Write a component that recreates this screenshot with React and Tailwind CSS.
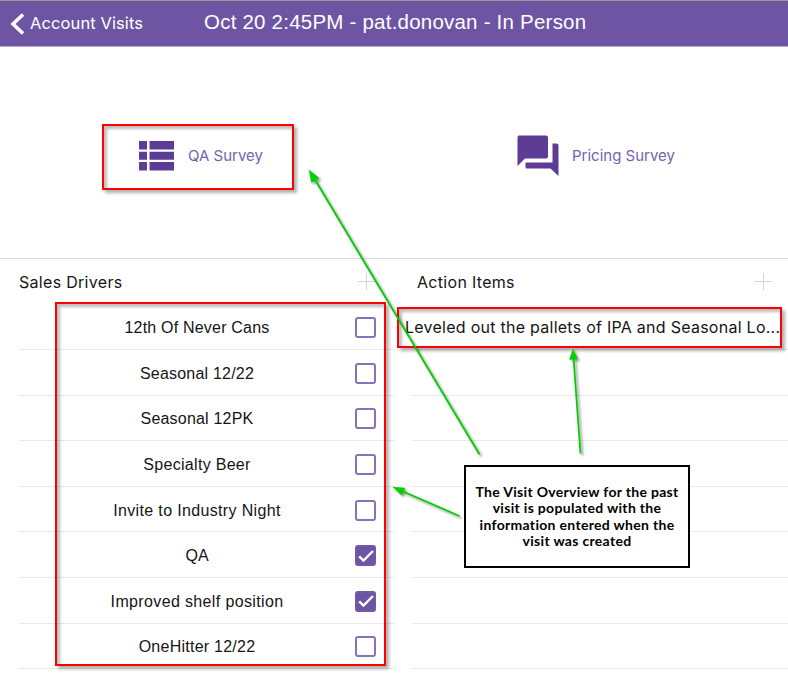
import React from "react";

const drivers = [
  { label: "12th Of Never Cans", spacing: "tracking-[0.2px]" },
  { label: "Seasonal 12/22", spacing: "tracking-[0.2px]" },
  { label: "Seasonal 12PK", spacing: "tracking-[0.2px]" },
  { label: "Specialty Beer", spacing: "tracking-[0.3px]" },
  { label: "Invite to Industry Night", spacing: "tracking-[0.35px]" },
  { label: "QA", spacing: "tracking-[0px]", checked: true },
  { label: "Improved shelf position", spacing: "tracking-[0.36px]", checked: true },
  { label: "OneHitter 12/22", spacing: "tracking-[0.25px]" },
];

const Checkbox = ({ checked }) => (
  <span
    className={
      "flex h-[21px] w-[21px] shrink-0 items-center justify-center rounded-[3px] border-2 " +
      (checked ? "border-[#7158aa] bg-[#6b54a4]" : "border-[#8473b8] bg-white")
    }
  >
    {checked && (
      <svg width="16" height="16" viewBox="0 0 16 16" fill="none" className="shrink-0">
        <path d="M1.2 8.4L5.5 12.5L15 3" stroke="white" strokeWidth="2.4" />
      </svg>
    )}
  </span>
);

const Plus = () => (
  <svg width="17" height="17" viewBox="0 0 17 17" stroke="#d4d4d4">
    <path d="M8.5 0V17M0 8.5H17" />
  </svg>
);

const Frame = ({ className }) => (
  <div
    className={
      "absolute border-2 border-[#ff0000] shadow-[3px_3px_3px_rgba(0,0,0,0.3),inset_3px_3px_3px_rgba(0,0,0,0.26)] " +
      className
    }
  />
);

export default function App() {
  return (
    <div className="relative h-[675px] w-[788px] overflow-hidden bg-white font-['Liberation_Sans',sans-serif] text-[#151515]">
      <header className="flex h-[47px] border-t border-b border-t-[#9a958e] border-b-[#b5abcf] bg-[#6d55a4] text-white">
        <div className="flex w-[204px] items-center pl-[10px]">
          <svg width="15" height="22" viewBox="0 0 15 22" fill="none">
            <path d="M13 1.5L3 11L13 20.5" stroke="white" strokeWidth="3.6" />
          </svg>
          <span className="-mt-[2px] ml-[5px] whitespace-nowrap font-[Inter,sans-serif] text-[16.5px] leading-[20px] tracking-[0.1px]">
            Account Visits
          </span>
        </div>
        <h1 className="mt-[9px] whitespace-nowrap text-[20.5px] leading-[24px] tracking-[0.22px]">
          Oct 20 2:45PM - pat.donovan - In Person
        </h1>
      </header>

      <section className="flex h-[212px] border-b border-[#dedede] text-[#7761b0]">
        <div className="flex h-[218px] w-[394px] items-center pl-[139px]">
          <svg width="36" height="30" viewBox="0 0 36 30" fill="#5d3c96">
            <path d="M0 0H8V8.5H0ZM10.5 0H35V8.5H10.5ZM0 10.7H8V18.8H0ZM10.5 10.7H35V18.8H10.5ZM0 21H8V29.5H0ZM10.5 21H35V29.5H10.5Z" />
          </svg>
          <span className="ml-[13px] whitespace-nowrap font-[Inter,sans-serif] text-[15px]">QA Survey</span>
        </div>
        <div className="flex h-[218px] w-[394px] items-center pl-[123px]">
          <svg width="42" height="42" viewBox="0 0 42 42" fill="#5d3c96">
            <path d="M2 0.5H29Q31 0.5 31 2.5V21.5Q31 23.5 29 23.5H8L0.5 31V2.5Q0.5 0.5 2 0.5Z" />
            <path d="M35.5 8.5H39.5Q41.5 8.5 41.5 10.5V41L33.5 33.5H10Q8.5 33.5 8.5 32V27.5H35.5Z" />
          </svg>
          <span className="ml-[13px] whitespace-nowrap font-[Inter,sans-serif] text-[15px]">Pricing Survey</span>
        </div>
      </section>

      <main className="flex gap-[17px] pl-[19px]">
        <section className="w-[376px]">
          <div className="flex h-[45.5px] items-center justify-between pr-[20px]">
            <h2 className="font-[Inter,sans-serif] text-[16px] leading-[20px] tracking-[0.3px]">Sales Drivers</h2>
            <Plus />
          </div>
          <ul>
            {drivers.map((d) => (
              <li key={d.label} className="flex h-[45.6px] items-center border-b border-[#e9e9e9] pt-[2px]">
                <span className={"w-[336px] pl-[20px] pt-[1px] text-center text-[16px] leading-[20px] " + d.spacing}>
                  {d.label}
                </span>
                <Checkbox checked={d.checked} />
              </li>
            ))}
          </ul>
        </section>
        <section className="w-[376px]">
          <div className="flex h-[45.5px] items-center justify-between pr-[16px] pl-[5px]">
            <h2 className="font-[Inter,sans-serif] text-[16px] leading-[20px] tracking-[0.3px]">Action Items</h2>
            <Plus />
          </div>
          <ul>
            {drivers.map((d, i) => (
              <li key={d.label} className="flex h-[45.6px] items-center border-b border-[#e9e9e9]">
                {i === 0 && (
                  <span className="-ml-[7px] whitespace-nowrap font-[Inter,sans-serif] text-[16px] leading-[20px] tracking-[0.26px]">
                    Leveled out the pallets of IPA and Seasonal Lo...
                  </span>
                )}
              </li>
            ))}
          </ul>
        </section>
      </main>

      <Frame className="left-[102px] top-[124px] h-[66px] w-[192px]" />
      <Frame className="left-[55px] top-[302px] h-[364px] w-[331px]" />
      <Frame className="left-[397px] top-[307px] h-[41px] w-[385px]" />

      <svg className="absolute left-0 top-0" width="788" height="675" viewBox="0 0 788 675">
        <g
          fill="#00d000"
          stroke="#00d000"
          className="drop-shadow-[2px_2px_1px_rgba(0,0,0,0.4)]"
        >
          <path d="M479.5 454.5L314 178M580.5 453.5L573.5 358M459.5 516L402 491" strokeWidth="1.8" />
          <path d="M309 170L319 178L311.5 182.5ZM573 349L577.5 359L569.5 359.5ZM393 487L405 488L401.5 495Z" strokeWidth="0.5" />
        </g>
      </svg>

      <div className="absolute left-[464px] top-[465px] flex h-[103px] w-[226px] flex-col items-center justify-center whitespace-nowrap border-2 border-black bg-white text-center font-[Lato,sans-serif] text-[14px] font-bold leading-[16.3px] tracking-[0.31px] text-black">
        <span>The Visit Overview for the past</span>
        <span>visit is populated with the</span>
        <span>information entered when the</span>
        <span>visit was created</span>
      </div>
    </div>
  );
}
